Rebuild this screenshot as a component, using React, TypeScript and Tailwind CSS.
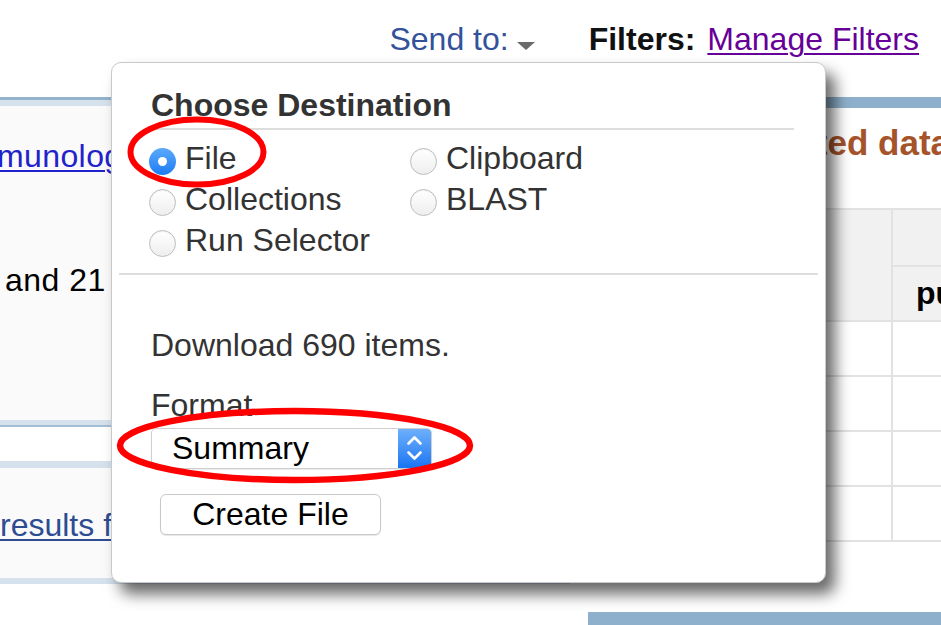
import React from 'react'

type RadioItem = { label: string; checked?: boolean }

const destinations: RadioItem[] = [
  { label: 'File', checked: true },
  { label: 'Clipboard' },
  { label: 'Collections' },
  { label: 'BLAST' },
  { label: 'Run Selector' },
]

function Radio({ checked }: { checked?: boolean }) {
  if (checked) {
    return (
      <span className="mt-[10px] flex h-[27px] w-[27px] shrink-0 items-center justify-center rounded-full bg-linear-to-b from-[#5aa9fb] to-[#1a7bf4]">
        <span className="h-[9px] w-[9px] rounded-full bg-white" />
      </span>
    )
  }
  return (
    <span className="mt-[10px] h-[27px] w-[27px] shrink-0 rounded-full border border-[#bdbdbd] bg-linear-to-b from-white to-[#eeeeee] shadow-[inset_0_1px_1px_rgba(0,0,0,0.06)]" />
  )
}

function Strip({ bottomLine }: { bottomLine?: boolean }) {
  return (
    <div
      className={`h-[7px] bg-[#d5e1ec] ${bottomLine ? 'border-b-2 border-[#a3bdd5]' : ''}`}
    />
  )
}

export default function App() {
  return (
    <div className="relative h-[625px] w-[941px] overflow-hidden bg-white font-['Liberation_Sans',Arial,sans-serif] text-[32px]">
      {/* top bar */}
      <div className="flex h-[97px] items-baseline justify-end pr-[22px] pt-[21px] leading-[36px]">
        <span className="text-[#34529a]">Send to:</span>
        <svg width="18" height="8" viewBox="0 0 18 8" className="mb-[5px] ml-[8px]">
          <path d="M0 0 H18 L9 8 Z" fill="#6a6a6a" />
        </svg>
        <span className="ml-[54px] font-bold text-[#111]">Filters:</span>
        <a className="ml-[12px] text-[#660099] underline decoration-2 underline-offset-[3px]">Manage Filters</a>
      </div>

      {/* page body behind the popup */}
      <div className="flex">
        <div className="w-[570px] shrink-0">
          <section className="bg-[#fafafa]">
            <div className="h-[3px] bg-[#93b2cc]" />
            <div className="h-[6px] bg-[#d5e1ec]" />
            <div className="h-[314px] overflow-hidden">
              <p className="ml-[-155px] mt-[32px] whitespace-nowrap leading-[36px] tracking-[0.4px]">
                <a className="text-[#2222cc] underline decoration-2 underline-offset-[3px]">Clinical Immunology</a>
              </p>
              <p className="ml-[5px] mt-[88px] whitespace-nowrap leading-[36px] tracking-[0.5px] text-black">and 21 samples</p>
            </div>
            <Strip bottomLine />
          </section>
          <section className="mt-[34px] bg-[#fafafa]">
            <Strip />
            <div className="h-[110px] overflow-hidden">
              <p className="mt-[39px] whitespace-nowrap leading-[36px]">
                <a className="text-[#2e4c92] underline decoration-2 underline-offset-[3px]">results for runs</a>
              </p>
            </div>
            <div className="h-[6px] bg-[#d5e1ec]" />
          </section>
        </div>

        <div className="ml-[18px] min-w-0 flex-1 overflow-hidden">
          <div className="h-[11px] bg-[#8fb0cc]" />
          <h2 className="mt-[17px] whitespace-nowrap pl-[82px] text-[35px] font-bold leading-[36px] text-[#a5532b]">Find related data</h2>
          <div className="mt-[47px] grid grid-cols-[305px_1fr] border-y-2 border-[#e2e2e2]">
            <div className="row-span-2 border-r-2 border-[#e2e2e2] bg-[#f1f1f1]" />
            <div className="h-[57px] border-b-2 border-[#e2e2e2] bg-[#f1f1f1]" />
            <div className="h-[53px] whitespace-nowrap bg-[#f1f1f1] pl-[23px] font-bold leading-[53px] text-black">published</div>
            {[0, 1, 2, 3].map((i) => (
              <React.Fragment key={i}>
                <div className="h-[55px] border-r-2 border-t-2 border-[#e2e2e2]" />
                <div className="h-[55px] border-t-2 border-[#e2e2e2]" />
              </React.Fragment>
            ))}
          </div>
          <div className="mt-[70px] h-[15px] bg-[#8fb0cc]" />
        </div>
      </div>

      {/* Send to popup */}
      <div className="absolute left-[111px] top-[62px] h-[521px] w-[715px] rounded-[10px] border border-[#c9c9c9] bg-white pb-[47px] pt-[24px] text-[#333] shadow-[9px_11px_15px_rgba(0,0,0,0.6)]">
        <div className="pl-[39px] pr-[31px]">
          <h3 className="font-bold leading-[36px]">Choose Destination</h3>
          <div className="mt-[5px] h-[2px] bg-[#dddddd]" />
        </div>
        <div className="mt-[8px] grid grid-cols-[261px_1fr] pl-[37px]">
          {destinations.map((d) => (
            <label key={d.label} className="flex h-[41px] items-start leading-[41px]">
              <Radio checked={d.checked} />
              <span className="ml-[9px] whitespace-nowrap">{d.label}</span>
            </label>
          ))}
        </div>
        <div className="mx-[7px] mt-[12px] h-[2px] bg-[#dddddd]" />

        <div className="pl-[39px]">
          <p className="mt-[52px] leading-[36px]">Download 690 items.</p>
          <p className="mt-[24px] leading-[36px]">Format</p>
          <div className="mt-[5px] flex h-[41px] w-[281px] overflow-hidden rounded-[5px] border border-[#cfcfcf] bg-white shadow-[0_1px_1px_rgba(0,0,0,0.08)]">
            <span className="flex-1 pl-[20px] leading-[39px] text-black">Summary</span>
            <span className="flex w-[33px] items-center justify-center bg-linear-to-b from-[#6cb0fb] to-[#1674f3]">
              <svg width="33" height="41" viewBox="0 0 33 41">
                <path d="M10.5 15.5 L16.5 9.5 L22.5 15.5" fill="none" stroke="#fff" strokeWidth="2.6" strokeLinecap="round" strokeLinejoin="round" />
                <path d="M10.5 24.5 L16.5 30.5 L22.5 24.5" fill="none" stroke="#fff" strokeWidth="2.6" strokeLinecap="round" strokeLinejoin="round" />
              </svg>
            </span>
          </div>
        </div>
        <button className="ml-[48px] mt-[25px] h-[41px] w-[221px] rounded-[6px] border border-[#c9c9c9] bg-white leading-[39px] text-black shadow-[0_1px_1px_rgba(0,0,0,0.1)]">
          Create File
        </button>
      </div>

      {/* red annotation ellipses */}
      <svg className="pointer-events-none absolute left-0 top-0" width="941" height="625" viewBox="0 0 941 625">
        <ellipse cx="197" cy="152" rx="66.5" ry="32.5" fill="none" stroke="#ff0000" strokeWidth="6" />
        <ellipse cx="295" cy="445.5" rx="175" ry="34.5" fill="none" stroke="#ff0000" strokeWidth="6.5" />
      </svg>
    </div>
  )
}
